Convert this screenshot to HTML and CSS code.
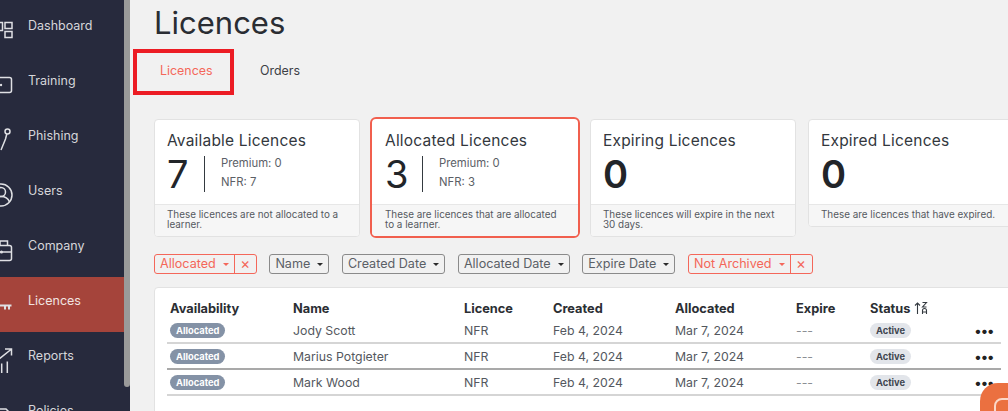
FILE: index.html
```html
<!DOCTYPE html>
<html lang="en">
<head>
<meta charset="utf-8">
<title>Licences</title>
<link rel="stylesheet" href="styles.css">
</head>
<body>
<div class="app">
  <aside class="side">
    <nav class="nav">
      <a class="nav-item"><svg class="ico" viewBox="0 0 24 24"><path d="M-6 4.500h8.500v8h-8.500zM5 4.500h7v6H5zM5 13.500h7v6H5z"/></svg><span>Dashboard</span></a>
      <a class="nav-item"><svg class="ico" viewBox="0 0 24 24"><rect x="-8" y="4.500" width="19.500" height="15" rx="2"/><circle cx="1" cy="12" r="1.200" class="dot"/></svg><span>Training</span></a>
      <a class="nav-item"><svg class="ico" viewBox="0 0 24 24"><circle cx="7.500" cy="3.500" r="2.500"/><path d="M6.800 6 5.500 11 1 22"/></svg><span>Phishing</span></a>
      <a class="nav-item"><svg class="ico" viewBox="0 0 24 24"><circle cx="1" cy="12" r="11"/><circle cx="1" cy="9" r="4.500"/><path d="M-7 20c1-5 4-6.500 8-6.500s7 1.500 8.500 5.500"/></svg><span>Users</span></a>
      <a class="nav-item"><svg class="ico" viewBox="0 0 24 24"><rect x="-8" y="7.500" width="19.500" height="15" rx="2"/><path d="M0 7.500V3h7.500v4.500M-8 14h19.500"/><circle cx="1.500" cy="14" r="1.500" class="dot"/></svg><span>Company</span></a>
      <a class="nav-item active"><svg class="ico" viewBox="0 0 24 24"><path d="M-8 12.500h19.500M5 12.500v4M9 12.500v4" stroke-width="2"/></svg><span>Licences</span></a>
      <a class="nav-item"><svg class="ico" viewBox="0 0 24 24"><path d="M-6 15 11 1.500M5 1h6.500v6.500M1.700 15.500V25M7.300 13.500V25"/></svg><span>Reports</span></a>
      <a class="nav-item"><svg class="ico" viewBox="0 0 24 24"><path d="M-6 6h12l4 4v16H-6z"/></svg><span>Policies</span></a>
    </nav>
    <div class="scroll-thumb"></div>
  </aside>
  <main class="main">
    <h1 class="title">Licences</h1>
    <div class="tabs">
      <a class="tab on">Licences</a>
      <a class="tab">Orders</a>
    </div>
    <section class="cards">
      <article class="card">
        <div class="card-body">
          <h2>Available Licences</h2>
          <div class="stat"><b class="num">7</b><div class="split"><span>Premium: 0</span><span>NFR: 7</span></div></div>
        </div>
        <p class="note">These licences are not allocated to a learner.</p>
      </article>
      <article class="card sel">
        <div class="card-body">
          <h2>Allocated Licences</h2>
          <div class="stat"><b class="num">3</b><div class="split"><span>Premium: 0</span><span>NFR: 3</span></div></div>
        </div>
        <p class="note">These are licences that are allocated to a learner.</p>
      </article>
      <article class="card">
        <div class="card-body">
          <h2>Expiring Licences</h2>
          <div class="stat"><b class="num heavy">0</b></div>
        </div>
        <p class="note">These licences will expire in the next 30 days.</p>
      </article>
      <article class="card wide">
        <div class="card-body">
          <h2>Expired Licences</h2>
          <div class="stat"><b class="num heavy">0</b></div>
        </div>
        <p class="note">These are licences that have expired.</p>
      </article>
    </section>
    <div class="filters">
      <div class="filter hot"><span class="f-main">Allocated<i class="caret"></i></span><span class="f-x">×</span></div>
      <div class="filter"><span class="f-main">Name<i class="caret"></i></span></div>
      <div class="filter"><span class="f-main">Created Date<i class="caret"></i></span></div>
      <div class="filter"><span class="f-main">Allocated Date<i class="caret"></i></span></div>
      <div class="filter"><span class="f-main">Expire Date<i class="caret"></i></span></div>
      <div class="filter hot"><span class="f-main">Not Archived<i class="caret"></i></span><span class="f-x">×</span></div>
    </div>
    <section class="panel">
      <div class="row head">
        <span>Availability</span><span>Name</span><span>Licence</span><span>Created</span><span>Allocated</span><span>Expire</span>
        <span class="status-h">Status <svg class="sort" viewBox="0 0 14 14"><path d="M3.500 13V2M1 4.500 3.500 2 6 4.500"/><path d="M8.500 1.500h4l-4 4.500h4M8.500 13V9.500a2 2 0 0 1 4 0V13M8.500 11h4"/></svg></span><span></span>
      </div>
      <div class="row line">
        <span><em class="pill grey">Allocated</em></span><span>Jody Scott</span><span>NFR</span><span>Feb 4, 2024</span><span>Mar 7, 2024</span><span class="dash">---</span><span><em class="pill pale">Active</em></span><span class="more">•••</span>
      </div>
      <div class="row line dark">
        <span><em class="pill grey">Allocated</em></span><span>Marius Potgieter</span><span>NFR</span><span>Feb 4, 2024</span><span>Mar 7, 2024</span><span class="dash">---</span><span><em class="pill pale">Active</em></span><span class="more">•••</span>
      </div>
      <div class="row line">
        <span><em class="pill grey">Allocated</em></span><span>Mark Wood</span><span>NFR</span><span>Feb 4, 2024</span><span>Mar 7, 2024</span><span class="dash">---</span><span><em class="pill pale">Active</em></span><span class="more">•••</span>
      </div>
    </section>
  </main>
  <div class="chat"><i></i></div>
  <div class="marker"></div>
</div>
</body>
</html>
```
FILE: styles.css
```css
* { box-sizing: border-box; }
html, body { margin: 0; height: 100%; overflow: hidden; }
body { font-family: Inter, "Open Sans", "Liberation Sans", sans-serif; color: #343a40; background: #f1f1f1; }
.app { display: flex; width: 1008px; height: 411px; position: relative; overflow: hidden; }
.side { flex: 0 0 130px; background: #272a3d; position: relative; overflow: hidden; }
.nav { display: flex; flex-direction: column; padding-top: 2px; }
.nav-item { display: flex; flex: none; align-items: center; height: 55px; width: 124px; color: #d6d6da; font-size: 12.500px; gap: 4px; }
.nav-item span { margin-bottom: 8px; }
.nav-item.active { background: #a5443b; color: #f1e4e2; }
.ico { width: 24px; height: 24px; flex: none; overflow: visible; fill: none; stroke: #dfe0e4; stroke-width: 1.500; }
.dot { fill: #dfe0e4; stroke: none; }
.scroll-thumb { position: absolute; left: 124px; top: 0; width: 6px; height: 387px; background: #9a9a9a; border-radius: 0 0 3px 3px; }
.main { flex: 1; min-width: 0; padding: 0 0 0 24px; overflow: hidden; }
.title { margin: 4px 0 0; font-size: 31px; line-height: 37px; font-weight: 400; color: #2a2d33; }
.tabs { display: flex; margin-top: 7px; height: 44px; align-items: center; }
.tab { font-size: 12.400px; color: #3c4046; }
.tab:first-child { width: 106px; padding-left: 6px; }
.tab.on { color: #f4675a; }
.cards { display: flex; align-items: flex-start; gap: 5px; margin-top: 27px; }
.card { flex: 0 0 206px; height: 118px; background: #fff; border: 1px solid #e2e2e2; border-radius: 4px; display: flex; flex-direction: column; overflow: hidden; }
.card.sel { flex-basis: 210px; height: 121px; margin: -2px 5px 0 5px; border: 2px solid #f15f4e; border-radius: 6px; }
.card.wide { flex: 0 0 260px; height: 108px; margin-left: 7px; }
.card-body { flex: 1; padding: 12px 12px 0; }
.card.sel .card-body { padding: 13px 12px 0 13px; }
.card h2 { margin: 0; font-size: 15.500px; line-height: 17px; font-weight: 400; letter-spacing: .2px; color: #33373d; white-space: nowrap; }
.stat { display: flex; align-items: center; height: 36px; margin-top: 7px; }
.num { font-size: 38px; line-height: 36px; font-weight: 400; color: #222529; width: 37px; flex: none; }
.num.heavy { font-weight: 600; }
.split { border-left: 1px solid #343a40; height: 36px; padding-left: 16px; display: flex; flex-direction: column; gap: 5px; font-size: 11.300px; line-height: 14px; color: #5b6066; white-space: nowrap; }
.note { margin: 0; background: #f6f6f6; border-top: 1px solid #e7e7e7; padding: 4px 12px 3px; font-size: 9.900px; line-height: 10px; color: #55595f; min-height: 32px; }
.card.sel .note { padding-left: 13px; }
.card.wide .note { min-height: 22px; }
.filters { display: flex; gap: 12.600px; margin-top: 16px; }
.filter { display: flex; height: 20px; border: 1px solid #8a8a8a; border-radius: 3px; font-size: 12.600px; line-height: 18px; color: #5b6066; white-space: nowrap; }
.filter.hot { border-color: #f4675a; color: #f4675a; }
.f-main { padding: 0 5px 0 5px; display: flex; align-items: center; }
.f-x { border-left: 1px solid #f4675a; width: 22px; text-align: center; font-size: 15px; }
.caret { margin-left: 7px; border: 3.500px solid transparent; border-top-color: currentColor; border-bottom: 0; }
.filter:not(.hot) .caret { border-top-color: #2b2b2b; }
.panel { margin-top: 13px; width: 900px; height: 140px; background: #fff; border: 1px solid #e2e2e2; border-radius: 4px; padding: 10px 0 0 12px; }
.row { display: grid; grid-template-columns: 123px 171px 89px 122px 121px 74px 107px 24px; align-items: center; font-size: 12.300px; color: #54585e; height: 26px; width: 834px; border-bottom: 2px solid #d5d5d5; padding-left: 3px; white-space: nowrap; }
.row.head { height: 20px; border: 0; font-weight: 700; font-size: 12.800px; color: #2b2e33; }
.row.dark { border-bottom-color: #a9a9a9; }
.status-h { display: flex; align-items: center; gap: 4px; }
.sort { width: 14px; height: 14px; fill: none; stroke: #343a40; stroke-width: 1.100; }
.pill { display: block; width: fit-content; margin-top: 1px; font-style: normal; font-size: 9.300px; font-weight: 700; line-height: 15px; padding: 0 6px; border-radius: 8px; }
.pill.grey { background: #8492a6; color: #fff; }
.pill.pale { background: #e2e5ea; color: #3f4650; }
.dash { color: #8b8f94; }
.more { font-size: 14px; letter-spacing: -1.500px; color: #222; margin-left: -3px; }
.chat { position: absolute; left: 980px; top: 383px; width: 60px; height: 60px; background: #eb7040; border-radius: 18px; }
.chat i { position: absolute; left: 14px; top: 15px; width: 30px; height: 30px; border: 2px solid #fbd8c8; border-radius: 8px; }
.marker { position: absolute; left: 133px; top: 49px; width: 101px; height: 46px; border: 4px solid #ec1c24; }
```
